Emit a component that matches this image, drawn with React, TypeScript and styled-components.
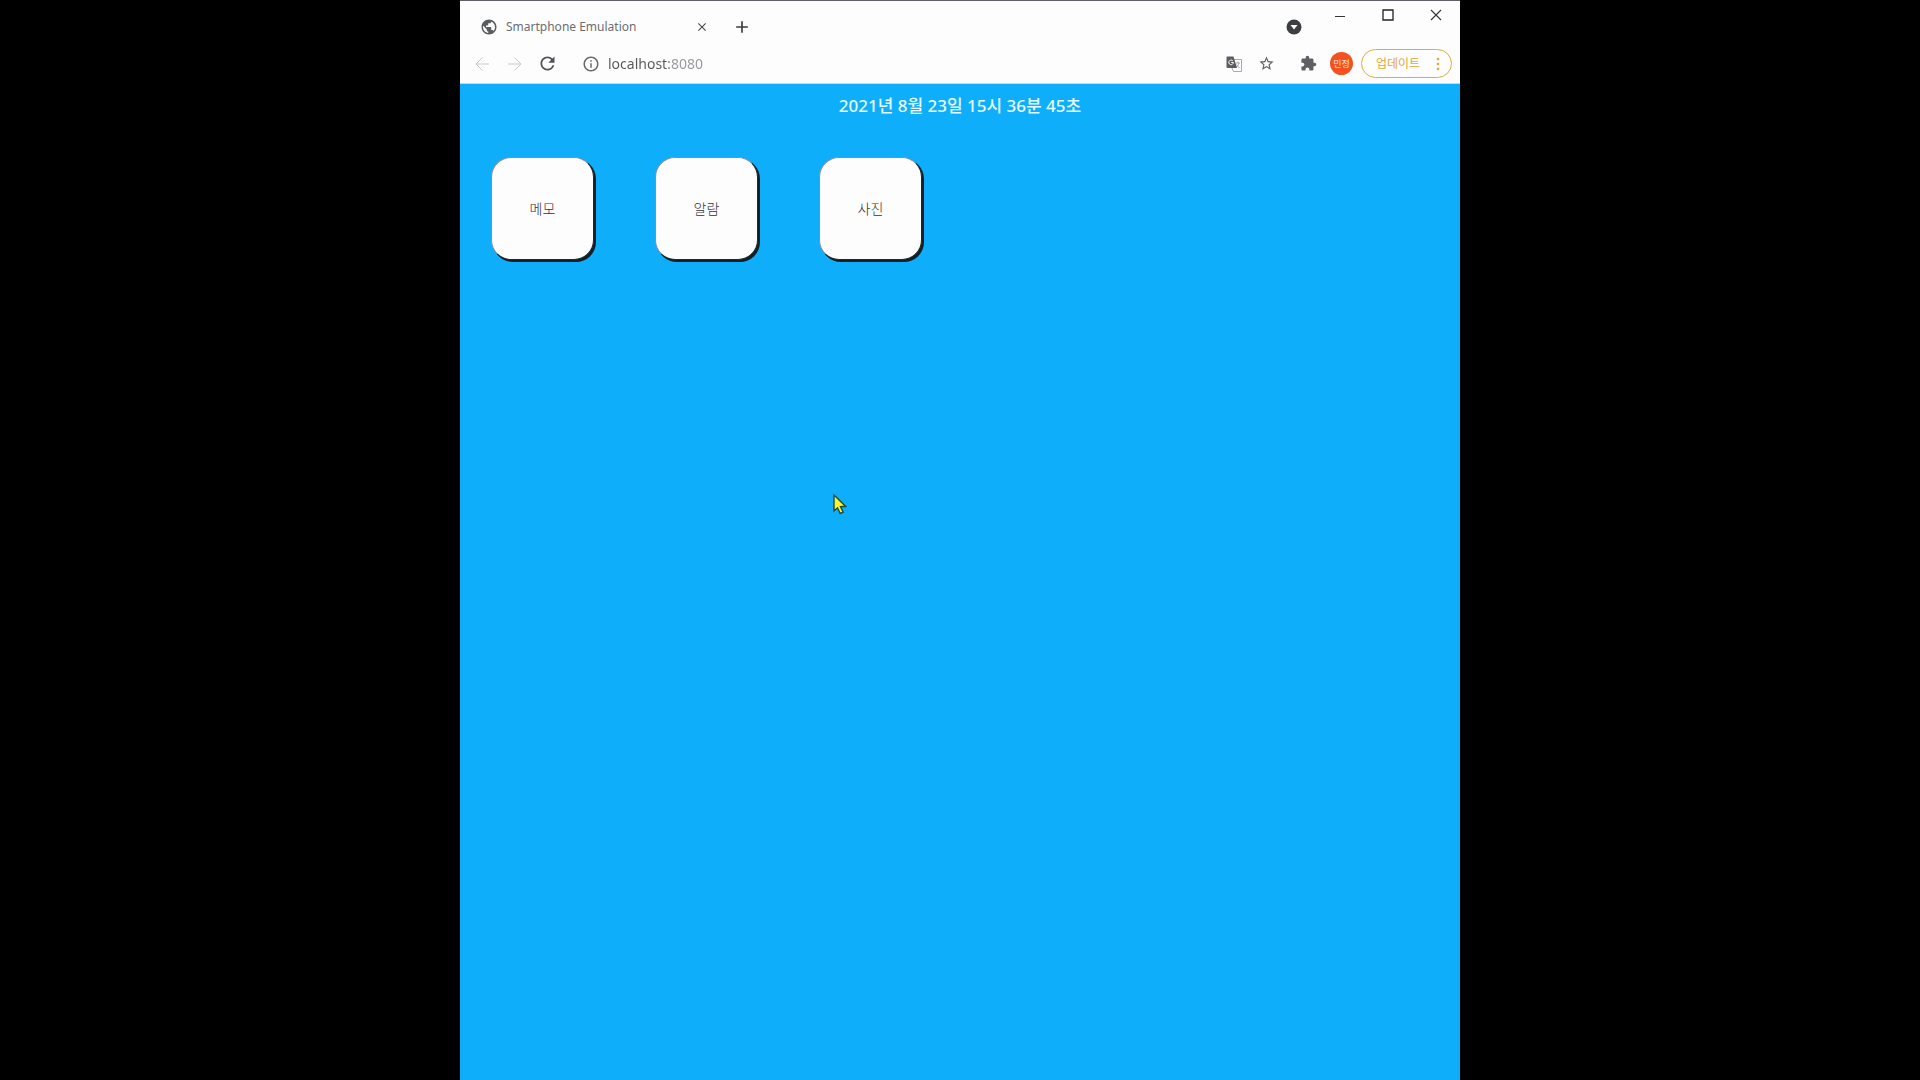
import React from "react";
import styled, { createGlobalStyle } from "styled-components";
import {
  MdAdd,
  MdClose,
  MdExtension,
  MdInfoOutline,
  MdPublic,
  MdRefresh,
  MdStarBorder,
} from "react-icons/md";

const GlobalStyle = createGlobalStyle`
  * { box-sizing: border-box; }
  body {
    margin: 0;
    background: #000;
    font-family: "Noto Sans", "Noto Sans CJK KR", sans-serif;
  }
  button, input { font: inherit; }
`;

const Desktop = styled.div`
  display: flex;
  justify-content: center;
  min-height: 100vh;
`;

const BrowserWindow = styled.div`
  position: relative;
  display: flex;
  flex-direction: column;
  width: 100%;
  max-width: 1000px;
  border-top: 1px solid #5f5f68;
  background: #fdfdfe;
`;

const TitleBar = styled.div`
  display: flex;
  justify-content: space-between;
  height: 44px;
`;

const TabStrip = styled.div`
  display: flex;
  align-items: center;
  gap: 23px;
  padding: 8px 0 0 20px;
`;

const Tab = styled.div`
  display: flex;
  align-items: center;
  gap: 8px;
  width: 229px;
  color: #5a5c5f;
`;

const TabTitle = styled.span`
  flex: 1;
  color: #6c6e71;
  font-size: 12px;
  line-height: 18px;
  white-space: nowrap;
`;

const IconButton = styled.button<{ $width: number; $color?: string }>`
  display: flex;
  align-items: center;
  justify-content: center;
  width: ${(p) => p.$width}px;
  height: 28px;
  padding: 0;
  border: 0;
  background: none;
  color: ${(p) => p.$color ?? "#5f6064"};
`;

const TitleControls = styled.div`
  display: flex;
  align-items: flex-start;
`;

const TabSearch = styled.div`
  padding-top: 12px;
`;

const Toolbar = styled.div`
  display: flex;
  align-items: center;
  height: 38px;
  padding: 0 8px 1px 5px;
`;

const Address = styled.label`
  display: flex;
  flex: 1;
  align-items: center;
  gap: 8px;
  margin-left: 18px;
  color: #66686b;
`;

const AddressInput = styled.input`
  flex: 1;
  min-width: 0;
  padding: 0;
  border: 0;
  outline: 0;
  font-size: 14px;
  line-height: 20px;
  background: linear-gradient(90deg, #55575a 61px, #97989c 61px);
  background-clip: text;
  -webkit-background-clip: text;
  -webkit-text-fill-color: transparent;
`;

const PageActions = styled.div`
  display: flex;
  margin-right: 8px;
`;

const Avatar = styled.button`
  width: 23px;
  height: 23px;
  margin: 0 8px 0 5px;
  padding: 0;
  border: 0;
  border-radius: 50%;
  background: #f4511e;
  color: #ffe3d6;
  font-size: 9px;
  line-height: 23px;
`;

const UpdateButton = styled.button`
  display: flex;
  align-items: center;
  justify-content: space-between;
  width: 91px;
  height: 29px;
  padding: 0 11px 0 14px;
  border: 1px solid #d9b040;
  border-radius: 15px;
  background: transparent;
  color: #e0a83a;
  font-size: 12px;
  line-height: 18px;
`;

const Screen = styled.main`
  flex: 1;
  border-top: 1px solid #a8e4fc;
  background: #0eaefb;
`;

const Clock = styled.time`
  display: block;
  padding-top: 9px;
  color: #e6fbff;
  font-size: 17px;
  font-weight: 500;
  line-height: 26px;
  text-align: center;
`;

const AppGrid = styled.nav`
  display: flex;
  flex-wrap: wrap;
  gap: 61px;
  padding: 38px 31px;
`;

const AppButton = styled.button`
  width: 103px;
  height: 103px;
  padding: 0;
  border: 1px solid #7f8cae;
  border-right-color: #20282e;
  border-bottom-color: #20282e;
  border-radius: 20px;
  background: #fdfdfe;
  box-shadow: 2px 2px 0 #121f28;
  color: #33343a;
  font-size: 14px;
  font-weight: 300;
  line-height: 20px;
`;

const Pointer = styled.svg`
  position: absolute;
  top: 493px;
  left: 373px;
`;

const apps = ["메모", "알람", "사진"];

export default function App() {
  return (
    <>
      <GlobalStyle />
      <Desktop>
        <BrowserWindow>
          <TitleBar>
            <TabStrip>
              <Tab>
                <MdPublic size={18} />
                <TabTitle>Smartphone Emulation</TabTitle>
                <IconButton $width={14} $color="#4c4d50" aria-label="Close tab">
                  <MdClose size={14} />
                </IconButton>
              </Tab>
              <IconButton $width={20} $color="#3c3d40" aria-label="New tab">
                <MdAdd size={20} />
              </IconButton>
            </TabStrip>
            <TitleControls>
              <TabSearch>
                <IconButton $width={45} aria-label="Search tabs">
                  <svg width="16" height="16" viewBox="0 0 16 16">
                    <circle cx="8" cy="8" r="7.5" fill="#3c3e42" />
                    <path d="M4.5 6h7L8 10.5z" fill="#fdfdfe" />
                  </svg>
                </IconButton>
              </TabSearch>
              <IconButton $width={48} aria-label="Minimize">
                <svg width="12" height="12" viewBox="0 0 12 12">
                  <path d="M1 7.500h10" stroke="#333" />
                </svg>
              </IconButton>
              <IconButton $width={48} aria-label="Maximize">
                <svg width="12" height="12" viewBox="0 0 12 12">
                  <path d="M1 1h10v10H1z" fill="none" stroke="#222" strokeWidth="1.3" />
                </svg>
              </IconButton>
              <IconButton $width={48} aria-label="Close">
                <svg width="12" height="12" viewBox="0 0 12 12">
                  <path d="M1 1l10 10M11 1L1 11" stroke="#333" strokeWidth="1.1" />
                </svg>
              </IconButton>
            </TitleControls>
          </TitleBar>
          <Toolbar>
            <IconButton $width={33} $color="#c8c9cc" aria-label="Back">
              <svg width="14" height="14" viewBox="0 0 14 14" fill="none" stroke="currentColor">
                <path d="M14 7H1M7.5 .5L1 7l6.500 6.500" />
              </svg>
            </IconButton>
            <IconButton $width={33} $color="#c8c9cc" aria-label="Forward">
              <svg width="14" height="14" viewBox="0 0 14 14" fill="none" stroke="currentColor">
                <path d="M0 7h13M6.500 .5L13 7l-6.500 6.500" />
              </svg>
            </IconButton>
            <IconButton $width={33} $color="#505256" aria-label="Reload">
              <MdRefresh size={21} />
            </IconButton>
            <Address>
              <MdInfoOutline size={18} />
              <AddressInput aria-label="Address" defaultValue="localhost:8080" />
            </Address>
            <PageActions>
              <IconButton $width={33} aria-label="Translate">
                <svg width="16" height="16" viewBox="0 0 16 16" fill="none">
                  <path d="M8 3.500h7.500v12H7.500L6 12" stroke="#a9aaae" />
                  <path d="M9.500 7h4.500M12 5.500V7M13 7c-.4 2-1.600 3.500-3 4.500M10.500 8.500l3 3.500" stroke="#a9aaae" />
                  <path d="M1.500 .5h6L11 12H1.500a1 1 0 0 1-1-1v-9.500a1 1 0 0 1 1-1z" fill="#5c5d62" />
                  <path d="M6.800 4.800a2.300 2.300 0 1 0 .6 1.700H5.200" stroke="#fdfdfe" />
                </svg>
              </IconButton>
              <IconButton $width={33} aria-label="Bookmark">
                <MdStarBorder size={17} />
              </IconButton>
            </PageActions>
            <IconButton $width={34} aria-label="Extensions">
              <MdExtension size={17} />
            </IconButton>
            <Avatar>민정</Avatar>
            <UpdateButton>
              업데이트
              <svg width="4" height="16" viewBox="0 0 4 16" fill="currentColor">
                <circle cx="2" cy="3" r="1.3" />
                <circle cx="2" cy="8" r="1.3" />
                <circle cx="2" cy="13" r="1.3" />
              </svg>
            </UpdateButton>
          </Toolbar>
          <Screen>
            <Clock dateTime="2021-08-23T15:36:45">2021년 8월 23일 15시 36분 45초</Clock>
            <AppGrid>
              {apps.map((name) => (
                <AppButton key={name}>{name}</AppButton>
              ))}
            </AppGrid>
          </Screen>
          <Pointer width="14" height="22" viewBox="0 0 14 22">
            <path
              d="M1 1v16l3.500-3.200 2.700 5.700 3-1.300-2.700-5.500 5-.4z"
              fill="#fff52a"
              stroke="#1d4a42"
              strokeWidth="1.4"
            />
          </Pointer>
        </BrowserWindow>
      </Desktop>
    </>
  );
}
